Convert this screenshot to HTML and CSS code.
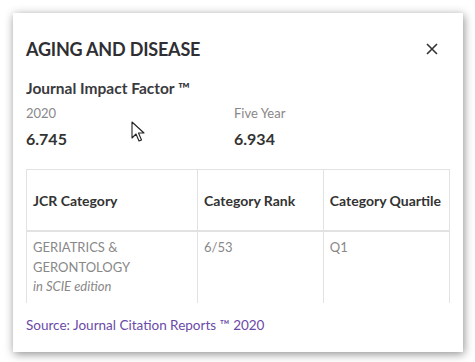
FILE: index.html
```html
<!DOCTYPE html>
<html lang="en">
<head>
    <meta charset="UTF-8">
    <meta name="viewport" content="width=device-width, initial-scale=1.0">
    <title>Journal Impact Factor</title>
    <link rel="stylesheet" href="styles.css">
</head>
<body>
    <div class="card">
        <div class="card-header">
            <h1>AGING AND DISEASE</h1>
            <button class="close-button" aria-label="Close">
                <svg width="12" height="12" viewBox="0 0 12 12">
                    <path d="M1 1 L11 11 M11 1 L1 11" stroke="#333" stroke-width="1.6" fill="none"/>
                </svg>
            </button>
        </div>

        <h2>Journal Impact Factor ™</h2>
        <div class="metrics">
            <div class="metric">
                <div class="metric-label">2020</div>
                <div class="metric-value">6.745</div>
            </div>
            <div class="metric">
                <div class="metric-label">Five Year</div>
                <div class="metric-value">6.934</div>
            </div>
        </div>

        <div class="table-wrap">
            <table>
                <thead>
                    <tr>
                        <th class="col-cat">JCR Category</th>
                        <th>Category Rank</th>
                        <th>Category Quartile</th>
                    </tr>
                </thead>
                <tbody>
                    <tr>
                        <td>GERIATRICS &amp;<br>GERONTOLOGY<br><em>in SCIE edition</em></td>
                        <td>6/53</td>
                        <td>Q1</td>
                    </tr>
                </tbody>
            </table>
        </div>

        <p class="source">Source: Journal Citation Reports ™ 2020</p>
    </div>

    <!-- mouse pointer captured in the screenshot -->
    <svg class="cursor" width="16" height="22" viewBox="0 0 16 22">
        <path d="M1 1 L1 17 L5 13 L8 20 L10.5 19 L7.5 12 L13 12 Z" fill="#fff" stroke="#222" stroke-width="1.1" stroke-linejoin="round"/>
    </svg>
</body>
</html>
```

FILE: styles.css
```css
body {
    font-family: Lato, "Open Sans", Arial, sans-serif;
    margin: 0;
    padding: 13px 12px 10px 13px;
    background: #fff;
    color: #333;
    position: relative;
}
.card {
    width: 450px;
    height: 339px;
    box-sizing: border-box;
    padding: 0 13px;
    background: #fff;
    box-shadow: 1px 2px 9px rgba(0, 0, 0, 0.45);
    overflow: hidden;
}
.card-header {
    display: flex;
    justify-content: space-between;
    align-items: center;
    padding-top: 24px;
}
h1 {
    margin: 0;
    font-size: 18px;
    font-weight: 700;
    letter-spacing: -0.2px;
    line-height: 24px;
    color: #2f2f33;
}
.close-button {
    background: none;
    border: none;
    padding: 0;
    margin-right: 12px;
    width: 12px;
    height: 12px;
    cursor: pointer;
    display: flex;
}
h2 {
    margin: 17px 0 0;
    font-size: 15.5px;
    font-weight: 700;
    line-height: 20px;
    color: #3a3a3e;
}
.metrics {
    display: flex;
    margin-top: 6px;
}
.metric {
    width: 208px;
}
.metric-label {
    font-size: 13px;
    line-height: 18px;
    color: #888;
}
.metric-value {
    margin-top: 7px;
    font-size: 16px;
    font-weight: 700;
    line-height: 20px;
    color: #333;
}
.table-wrap {
    margin-top: 20px;
    height: 134px;
    overflow: hidden;
    border: 1px solid #e2e2e2;
    border-bottom: none;
    width: 424px;
    box-sizing: border-box;
}
table {
    width: 100%;
    border-collapse: collapse;
    table-layout: fixed;
}
th {
    height: 60px;
    padding: 0 3px 0 6px;
    text-align: left;
    white-space: nowrap;
    font-size: 14px;
    font-weight: 700;
    color: #333;
    border-bottom: 2px solid #e2e2e2;
    border-left: 1px solid #e2e2e2;
}
th:first-child, td:first-child {
    border-left: none;
}
.col-cat {
    width: 161px;
}
td {
    vertical-align: top;
    padding: 6px 6px 40px;
    font-size: 13px;
    line-height: 19.5px;
    color: #888;
    border-left: 1px solid #e2e2e2;
}
td em {
    font-style: italic;
}
.source {
    margin: 12px 0 0;
    font-size: 13.5px;
    line-height: 20px;
    color: #6a4aa8;
}
.cursor {
    position: absolute;
    left: 131px;
    top: 121px;
}
```
